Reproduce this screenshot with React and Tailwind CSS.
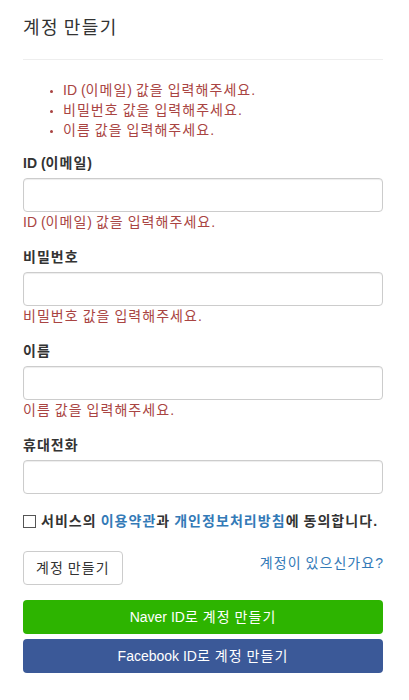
const font = { fontFamily: '"Liberation Sans", "Noto Sans CJK KR", sans-serif' }

// hangul runs are drawn a little wider, like the original korean font
const K = ({ children }) => {
	const parts = String(children).split(/([\uac00-\ud7a3]+)/)
	return parts.map((p, i) =>
		/[\uac00-\ud7a3]/.test(p) ? (
			<span key={i} className="tracking-[0.075em]">
				{p}
			</span>
		) : (
			p
		)
	)
}

const Field = ({ label, error }) => (
	<div className="flex flex-col">
		<label className="h-5 text-[14px] leading-5 font-bold text-[#333]">
			<K>{label}</K>
		</label>
		<input
			type="text"
			className="mt-[5px] h-[34px] w-full rounded-[4px] border border-[#ccc] bg-white px-3 text-[14px] shadow-[inset_0_1px_1px_rgba(0,0,0,0.075)] outline-none"
		/>
		{error && (
			<p className="h-5 text-[14px] leading-5 text-[#a94442]">
				<K>{error}</K>
			</p>
		)}
	</div>
)

const App = () => {
	return (
		<div style={font} className="min-h-screen bg-white text-[14px] text-[#333]">
			<div className="w-[383px] pl-[23px] pt-[18px]">
				<h3 className="h-5 text-[18px] leading-5 font-normal text-[#333]">
					<K>계정 만들기</K>
				</h3>
				<hr className="mt-[21px] border-t border-[#eee]" />

				<ul className="mt-5 list-disc pl-10 text-[14px] leading-5 text-[#a94442] marker:text-[10px]">
					<li className="h-5 leading-5"><K>ID (이메일) 값을 입력해주세요.</K></li>
					<li className="h-5 leading-5"><K>비밀번호 값을 입력해주세요.</K></li>
					<li className="h-5 leading-5"><K>이름 값을 입력해주세요.</K></li>
				</ul>

				<div className="mt-[13px] flex flex-col gap-[15px]">
					<Field label="ID (이메일)" error="ID (이메일) 값을 입력해주세요." />
					<Field label="비밀번호" error="비밀번호 값을 입력해주세요." />
					<Field label="이름" error="이름 값을 입력해주세요." />
					<Field label="휴대전화" />
				</div>

				<div className="mt-[17px] flex h-5 items-center gap-[5px] text-[14px] leading-5 font-bold">
					<span className="h-[13px] w-[13px] border border-[#555] bg-white" />
					<span>
						<K>서비스의 </K>
						<a className="text-[#337ab7]"><K>이용약관</K></a>
						<K>과 </K>
						<a className="text-[#337ab7]"><K>개인정보처리방침</K></a>
						<K>에 동의합니다.</K>
					</span>
				</div>

				<div className="mt-5 flex items-start justify-between">
					<button className="h-[34px] rounded-[4px] border border-[#ccc] bg-white px-3 text-[14px] text-[#333]">
						<K>계정 만들기</K>
					</button>
					<a className="mt-[2px] text-[14px] leading-5 text-[#337ab7]">
						<K>계정이 있으신가요?</K>
					</a>
				</div>

				<div className="mt-[15px] flex flex-col gap-[5px]">
					<button className="h-[34px] w-full rounded-[4px] bg-[#2db400] text-[14px] text-white">
						<K>Naver ID로 계정 만들기</K>
					</button>
					<button className="h-[34px] w-full rounded-[4px] bg-[#3b5998] text-[14px] text-white">
						<K>Facebook ID로 계정 만들기</K>
					</button>
				</div>
			</div>
		</div>
	)
}

export default App
